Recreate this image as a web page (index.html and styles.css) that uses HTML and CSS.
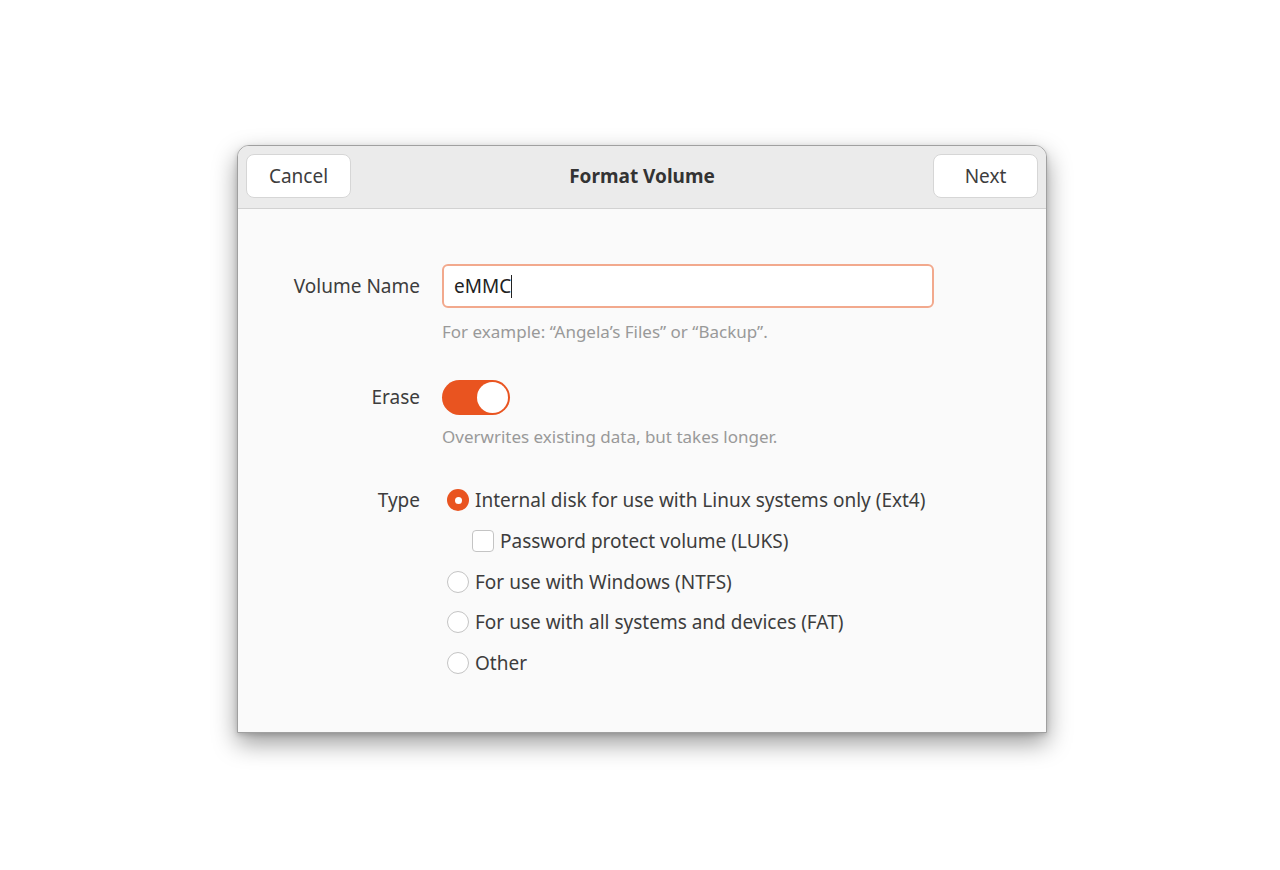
FILE: index.html
```html
<!DOCTYPE html>
<html>
  <head>
    <meta charset="utf-8">
    <meta name="viewport" content="width=device-width">
    <title>Format Volume</title>
    <link rel="stylesheet" href="styles.css">
  </head>

  <body>
    <div class="dialog">
      <div class="headerbar">
        <button class="btn">Cancel</button>
        <div class="title">Format Volume</div>
        <button class="btn">Next</button>
      </div>

      <div class="content">
        <div class="form-row">
          <div class="form-label">Volume Name</div>
          <div class="form-field">
            <div class="entry">eMMC<span class="caret"></span></div>
            <div class="hint">For example: “Angela’s Files” or “Backup”.</div>
          </div>
        </div>

        <div class="form-row">
          <div class="form-label erase-label">Erase</div>
          <div class="form-field">
            <div class="switch"><div class="knob"></div></div>
            <div class="hint">Overwrites existing data, but takes longer.</div>
          </div>
        </div>

        <div class="form-row type-row">
          <div class="form-label type-label">Type</div>
          <div class="form-field options">
            <div class="option"><span class="radio checked"></span>Internal disk for use with Linux systems only (Ext4)</div>
            <div class="option sub"><span class="check"></span>Password protect volume (LUKS)</div>
            <div class="option"><span class="radio"></span>For use with Windows (NTFS)</div>
            <div class="option"><span class="radio"></span>For use with all systems and devices (FAT)</div>
            <div class="option"><span class="radio"></span>Other</div>
          </div>
        </div>
      </div>
    </div>
  </body>
</html>
```

FILE: styles.css
```css
body, html {
  margin: 0;
}

body {
  background-color: #fff;
  font-family: "Noto Sans", "Open Sans", sans-serif;
  font-size: 19px;
  color: #3d3d3d;
  padding-top: 145px;
  padding-bottom: 60px;
}

.dialog {
  width: 808px;
  height: 586px;
  margin-left: 237px;
  background-color: #fafafa;
  border: 1px solid #a0a0a0;
  border-radius: 12px 12px 0 0;
  box-shadow: 0 10px 24px rgba(0, 0, 0, 0.4), 0 2px 5px rgba(0, 0, 0, 0.15);
  overflow: hidden;
}

.headerbar {
  height: 62px;
  background-color: #ebebeb;
  border-bottom: 1px solid #d2d2d2;
  display: flex;
  align-items: center;
  justify-content: space-between;
  padding: 0 8px;
}

.title {
  font-weight: bold;
  color: #333;
  margin-top: -2px;
}

.btn {
  width: 105px;
  height: 44px;
  font-family: inherit;
  font-size: 19px;
  color: #3d3d3d;
  background-color: #fff;
  border: 1px solid #d6d6d6;
  border-radius: 8px;
  margin-top: -2px;
}

.content {
  padding-top: 55px;
  display: flex;
  flex-direction: column;
  gap: 37px;
}

.form-row {
  display: grid;
  grid-template-columns: 160px 492px;
  column-gap: 22px;
  padding-left: 22px;
}

.type-row {
  margin-top: -5px;
}

.form-label {
  text-align: right;
  height: 44px;
  line-height: 44px;
}

.erase-label {
  height: 35px;
  line-height: 35px;
}

.type-label {
  height: 40px;
  line-height: 40px;
}

.entry {
  height: 40px;
  line-height: 40px;
  border: 2px solid #f2a98d;
  border-radius: 6px;
  background-color: #fff;
  padding-left: 10px;
  color: #222;
}

.caret {
  display: inline-block;
  width: 1px;
  height: 23px;
  background-color: #222;
  vertical-align: -5px;
}

.hint {
  margin-top: 12px;
  font-size: 17px;
  color: #999;
}

.switch + .hint {
  margin-top: 10px;
}

.switch {
  width: 68px;
  height: 35px;
  border-radius: 18px;
  background-color: #e95420;
  display: flex;
  align-items: center;
  justify-content: flex-end;
  padding-right: 2px;
  box-sizing: border-box;
}

.knob {
  width: 31px;
  height: 31px;
  border-radius: 50%;
  background-color: #fff;
}

.options {
  display: flex;
  flex-direction: column;
  padding-left: 5px;
}

.option {
  height: 40.7px;
  display: flex;
  align-items: center;
  gap: 6px;
}

.option.sub {
  padding-left: 25px;
}

.radio {
  width: 20px;
  height: 20px;
  border: 1px solid #c4c4c4;
  border-radius: 50%;
  background-color: #fff;
  box-sizing: content-box;
}

.radio.checked {
  width: 22px;
  height: 22px;
  border: none;
  background-color: #e95420;
  display: flex;
  align-items: center;
  justify-content: center;
}

.radio.checked::after {
  content: "";
  width: 7px;
  height: 7px;
  border-radius: 50%;
  background-color: #fff;
}

.check {
  width: 20px;
  height: 20px;
  border: 1px solid #c4c4c4;
  border-radius: 4px;
  background-color: #fff;
}
```
